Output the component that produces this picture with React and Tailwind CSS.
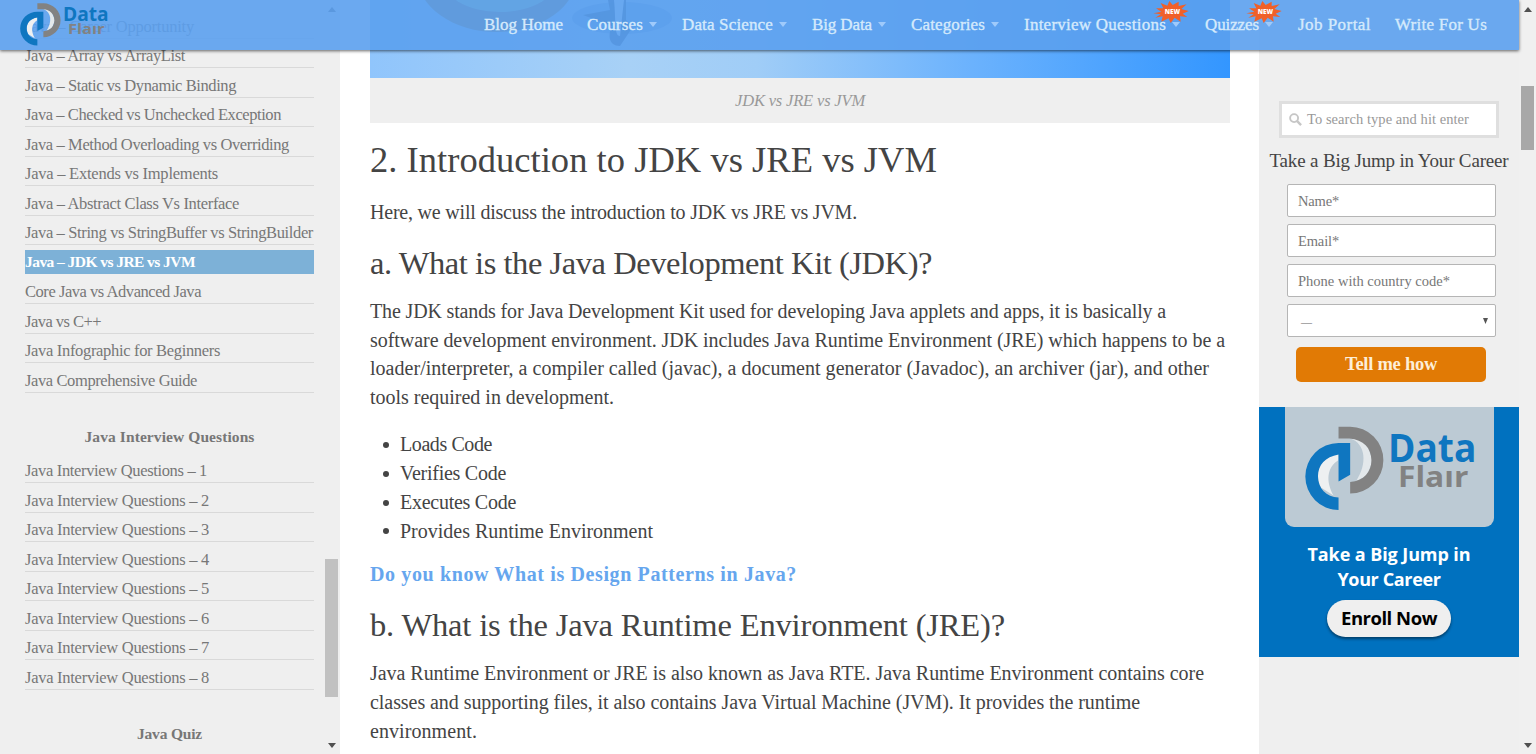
import { useLayoutEffect, useRef } from "react";

// Text run whose tracking is adjusted so that it spans exactly `w` pixels.
function Fit({ w, children, className = "" }) {
  const ref = useRef(null);
  useLayoutEffect(() => {
    const el = ref.current;
    el.style.letterSpacing = "0px";
    const natural = el.getBoundingClientRect().width;
    el.style.letterSpacing = `${(w - natural) / el.textContent.length}px`;
  }, [w, children]);
  return (
    <span ref={ref} className={`inline-block whitespace-nowrap ${className}`}>
      {children}
    </span>
  );
}

function Logo({ className }) {
  return (
    <svg viewBox="164 76 518 254" className={className} preserveAspectRatio="none" overflow="visible">
      <path d="M300 113C348 128 352 190 318 240L350 225L368 180L350 130L320 112Z" fill="#e3e8eb" />
      <path d="M265 78H300A100 100 0 0 1 300 278V243C342 240 364 212 364 178C364 142 340 116 298 113H265Z" fill="#828282" />
      <path d="M264 160C212 166 190 215 212 260L250 284C226 240 230 200 264 178Z" fill="#eef0f1" />
      <path d="M300 127V222L265 242V161C225 168 203 192 203 226C203 262 228 288 265 290V327A100 100 0 0 1 265 127Z" fill="#0f76c0" />
      <text x="414" y="185" textLength="266" lengthAdjust="spacingAndGlyphs" fontSize="116" fontWeight="700" fontFamily="Open Sans, sans-serif" fill="#0f76c0">Data</text>
      <text x="444" y="258" textLength="212" lengthAdjust="spacingAndGlyphs" fontSize="83" fontWeight="700" fontFamily="Open Sans, sans-serif" fill="#828282">Flaır</text>
    </svg>
  );
}

function NewBadge() {
  return (
    <svg viewBox="0 0 106 66" className="absolute -right-[25px] -top-[10px] h-[22px] w-[36px]">
      <path d="M0 37L24 32L8 22L30 22L22 6L42 14L48 0L58 12L76 2L76 15L100 10L84 24L106 30L88 38L102 48L80 46L82 62L64 50L52 66L46 52L24 62L28 46L6 50L22 40Z" fill="#f0602a" />
      <text x="34" y="40" textLength="46" lengthAdjust="spacingAndGlyphs" fontSize="20" fontWeight="800" fontFamily="Open Sans, sans-serif" fill="#fff">NEW</text>
    </svg>
  );
}

const nav = [
  ["Blog Home", 79],
  ["Courses", 56, true],
  ["Data Science", 91, true],
  ["Big Data", 60, true],
  ["Categories", 74, true],
  ["Interview Questions", 142, true, true],
  ["Quizzes", 54, true, true],
  ["Job Portal", 73],
  ["Write For Us", 92],
];

const topics = [
  ["Java – Career Opportunity", 169],
  ["Java – Array vs ArrayList", 160],
  ["Java – Static vs Dynamic Binding", 211],
  ["Java – Checked vs Unchecked Exception", 256],
  ["Java – Method Overloading vs Overriding", 264],
  ["Java – Extends vs Implements", 193],
  ["Java – Abstract Class Vs Interface", 214],
  ["Java – String vs StringBuffer vs StringBuilder", 288],
  ["Java – JDK vs JRE vs JVM", 170],
  ["Core Java vs Advanced Java", 176],
  ["Java vs C++", 76],
  ["Java Infographic for Beginners", 195],
  ["Java Comprehensive Guide", 172],
];

function SideItem({ label, w, active }) {
  return (
    <li className="flex h-[29.5px] items-end">
      <div
        className={
          active
            ? "mb-[2px] h-[24px] w-full bg-[#7db1d7] text-[15.5px] font-bold leading-[24px] text-white"
            : "mb-[1px] h-[24px] w-full border-b border-[#d9d9d9] text-[16.5px] leading-[23px] text-[#777]"
        }
      >
        <Fit w={w}>{label}</Fit>
      </div>
    </li>
  );
}

function Lines({ lines }) {
  return (
    <p className="text-[20px] leading-[28.8px]">
      {lines.map(([t, w]) => (
        <span key={t} className="block h-[28.8px]">
          <Fit w={w}>{t}</Fit>
        </span>
      ))}
    </p>
  );
}

function Field({ label, w }) {
  return (
    <div className="h-[33px] w-[209px] rounded-[2px] border border-[#b5b5b5] bg-white pl-[10px] text-[14.5px] leading-[32px] text-[#777]">
      <Fit w={w}>{label}</Fit>
    </div>
  );
}

function Arrow({ up, className }) {
  return (
    <svg viewBox="0 0 8 5" className={`h-[5px] w-[8px] ${className}`}>
      <path d={up ? "M0 5L4 0L8 5Z" : "M0 0L4 5L8 0Z"} fill="#505050" />
    </svg>
  );
}

export default function App() {
  return (
    <div className="relative flex h-[754px] w-[1536px] overflow-hidden bg-white font-['Liberation_Serif',serif] text-[#444]">
      <aside className="flex w-[340px] shrink-0 bg-[#efefef]">
        <nav className="w-[324px] pl-[25px] pr-[10px] pt-[10px]">
          <ul>
            {topics.map(([t, w]) => (
              <SideItem key={t} label={t} w={w} active={w === 170} />
            ))}
          </ul>
          <h4 className="mt-[31px] text-center text-[15.5px] font-bold leading-[24px] text-[#777]">
            <Fit w={170}>Java Interview Questions</Fit>
          </h4>
          <ul className="mt-[6px]">
            {[1, 2, 3, 4, 5, 6, 7, 8].map((n) => (
              <SideItem key={n} label={`Java Interview Questions – ${n}`} w={n === 1 ? 182 : 184} />
            ))}
          </ul>
          <h4 className="mt-[31px] text-center text-[15.5px] font-bold leading-[24px] text-[#777]">
            <Fit w={65}>Java Quiz</Fit>
          </h4>
        </nav>
        <div className="flex w-[16px] flex-col items-center pt-[7px]">
          <Arrow up />
          <div className="mt-[547px] h-[138px] w-[13px] -translate-x-px bg-[#c1c1c1]" />
          <Arrow className="mt-[46px]" />
        </div>
      </aside>

      <main className="w-[919px] shrink-0 px-[30px]">
        <figure className="w-[860px]">
          <svg viewBox="0 0 860 78" className="block h-[78px] w-[860px]">
            <defs>
              <linearGradient id="sky">
                <stop offset="0" stopColor="#90c5fc" />
                <stop offset=".3" stopColor="#a8d1f6" />
                <stop offset=".45" stopColor="#a0cdf7" />
                <stop offset=".7" stopColor="#6bb2fd" />
                <stop offset="1" stopColor="#3396ff" />
              </linearGradient>
            </defs>
            <rect width="860" height="78" fill="url(#sky)" />
            <ellipse cx="127" cy="-25" rx="80" ry="57" fill="#8a6a30" opacity=".9" />
            <ellipse cx="130" cy="-25" rx="60" ry="37" fill="#a8d890" opacity=".9" />
            <ellipse cx="252" cy="18" rx="50" ry="16" fill="#286cb5" opacity=".4" />
            <path d="M213 15L240 10L238 0H256V20L262 28L250 46C238 46 238 34 242 26Z" fill="#0f2c50" opacity=".8" />
            <path d="M244 0H254L250 36C244 36 246 20 244 0Z" fill="#d9eeff" />
          </svg>
          <figcaption className="h-[45px] bg-[#efefef] text-center text-[16.5px] italic leading-[45px] text-[#999]">
            <Fit w={130}>JDK vs JRE vs JVM</Fit>
          </figcaption>
        </figure>
        <h2 className="h-[75px] text-[36.5px] leading-[74px]">
          <Fit w={567}>2. Introduction to JDK vs JRE vs JVM</Fit>
        </h2>
        <Lines lines={[["Here, we will discuss the introduction to JDK vs JRE vs JVM.", 487]]} />
        <h3 className="h-[70px] text-[32.5px] leading-[72px]">
          <Fit w={562}>a. What is the Java Development Kit (JDK)?</Fit>
        </h3>
        <Lines
          lines={[
            ["The JDK stands for Java Development Kit used for developing Java applets and apps, it is basically a", 796],
            ["software development environment. JDK includes Java Runtime Environment (JRE) which happens to be a", 855],
            ["loader/interpreter, a compiler called (javac), a document generator (Javadoc), an archiver (jar), and other", 839],
            ["tools required in development.", 244],
          ]}
        />
        <ul className="mt-[18.4px] text-[20px] leading-[28.8px]">
          {[
            ["Loads Code", 92],
            ["Verifies Code", 106],
            ["Executes Code", 116],
            ["Provides Runtime Environment", 253],
          ].map(([t, w]) => (
            <li key={t} className="flex h-[28.9px] items-center">
              <span className="ml-[13px] mr-[11px] h-[6px] w-[6px] rounded-full bg-[#444]" />
              <Fit w={w}>{t}</Fit>
            </li>
          ))}
        </ul>
        <p className="mt-[13.4px] h-[29px] text-[20px] font-bold leading-[30px] text-[#66a6ee]">
          <Fit w={427}>Do you know What is Design Patterns in Java?</Fit>
        </p>
        <h3 className="h-[71px] text-[32.5px] leading-[74px]">
          <Fit w={635}>b. What is the Java Runtime Environment (JRE)?</Fit>
        </h3>
        <Lines
          lines={[
            ["Java Runtime Environment or JRE is also known as Java RTE. Java Runtime Environment contains core", 834],
            ["classes and supporting files, it also contains Java Virtual Machine (JVM). It provides the runtime", 770],
            ["environment.", 107],
          ]}
        />
      </main>

      <aside className="flex w-[260px] shrink-0 flex-col items-center bg-[#efefef] pt-[101px]">
        <div className="flex h-[37px] w-[220px] items-center border-[3px] border-[#dfdfdf] bg-white pl-[7px] text-[14.5px] text-[#999]">
          <svg viewBox="0 0 14 14" className="mr-[5px] h-[13px] w-[13px] shrink-0" fill="none" stroke="#c6c6c6">
            <circle cx="5.5" cy="5.5" r="4.3" strokeWidth="2" />
            <path d="M8.8 8.8L13 13" strokeWidth="2.6" />
          </svg>
          <Fit w={162}>To search type and hit enter</Fit>
        </div>
        <h3 className="h-[46px] whitespace-nowrap text-[19px] leading-[45px]">
          <Fit w={239}>Take a Big Jump in Your Career</Fit>
        </h3>
        <form className="flex flex-col items-center gap-[7px] pl-[5px]">
          <Field label="Name*" w={41} />
          <Field label="Email*" w={41} />
          <Field label="Phone with country code*" w={152} />
          <div className="flex h-[33px] w-[209px] items-center justify-between rounded-[2px] border border-[#b5b5b5] bg-white pl-[13px] pr-[7px] text-[#666]">
            <span className="mt-[3px] text-[11px]">—</span>
            <svg viewBox="0 0 5 6" className="h-[6px] w-[5px]">
              <path d="M0 0H5L2.5 6Z" fill="#555" />
            </svg>
          </div>
          <button type="button" className="mr-[2px] mt-[3px] h-[35px] w-[190px] rounded-[5px] bg-[#e17a05] pl-[1px] text-[18.5px] font-bold leading-[35px] text-[#fdeed8]">
            <Fit w={92}>Tell me how</Fit>
          </button>
        </form>
        <section className="mt-[25px] flex h-[250px] w-[260px] flex-col items-center bg-[#0071bf] font-['Open_Sans',sans-serif] font-bold">
          <div className="w-[209px] rounded-b-[9px] bg-[#bccad4] pl-[20px] pt-[19px] pb-[16px]">
            <Logo className="h-[85px] w-[172px]" />
          </div>
          <p className="mt-[15px] text-center text-[18px] leading-[25px] text-white">
            <Fit w={163}>Take a Big Jump in</Fit>
            <br />
            <Fit w={103}>Your Career</Fit>
          </p>
          <div className="mt-[8px] h-[37px] w-[124px] rounded-full bg-[#efefef] text-center text-[18.5px] leading-[36px] text-black shadow-[0_2px_3px_rgba(0,0,0,0.45)]">
            <Fit w={96}>Enroll Now</Fit>
          </div>
        </section>
      </aside>

      <div className="flex w-[17px] shrink-0 flex-col items-center bg-[#f0f0f0] pt-[7px]">
        <Arrow up />
        <div className="mt-[74px] h-[64px] w-[13px] bg-[#a8a8a8]" />
        <Arrow className="mt-[593px]" />
      </div>

      <header className="absolute left-0 top-0 flex h-[50px] w-[1519px] items-start bg-[#5ba0ee]/90 shadow-[0_1px_3px_rgba(0,0,0,0.6)]">
        <Logo className="ml-[20px] mt-[3px] h-[43px] w-[89px] shrink-0" />
        <nav className="ml-[375px] flex gap-[24px] text-[17px] leading-[49px] text-[#d5eafc] [-webkit-text-stroke:0.35px_#d5eafc]">
          {nav.map(([t, w, menu, fresh]) => (
            <a key={t} className="flex h-[48px] items-center whitespace-nowrap">
              <Fit w={w}>{t}</Fit>
              {menu && (
                <span className="relative ml-[5px] h-[5px] w-[10px]">
                  <svg viewBox="0 0 10 5" className="block h-[5px] w-[10px]">
                    <path d="M1 0H9L5 5Z" fill="#9fcafb" />
                  </svg>
                  {fresh && (
                    <span className="absolute -left-[17px] -top-[11px] [-webkit-text-stroke:0]">
                      <span className="relative block h-0 w-[10px]">
                        <NewBadge />
                      </span>
                    </span>
                  )}
                </span>
              )}
            </a>
          ))}
        </nav>
      </header>
    </div>
  );
}
